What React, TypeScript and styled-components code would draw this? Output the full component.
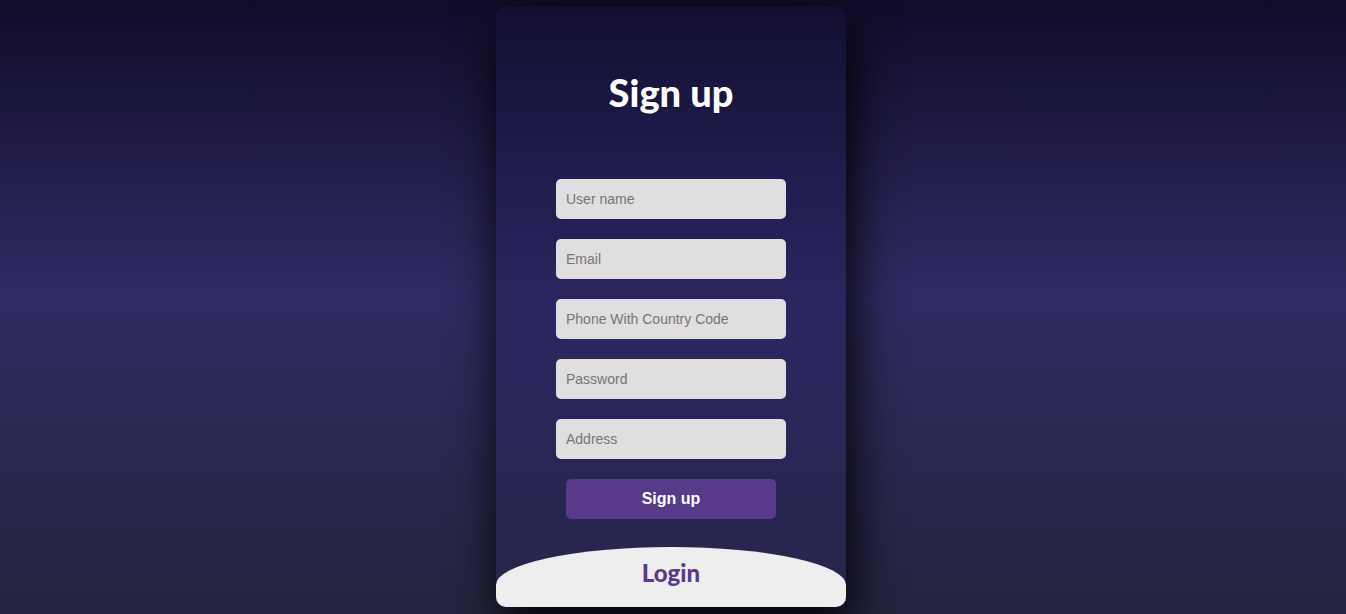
import React from 'react';
import styled, { createGlobalStyle } from 'styled-components';

const GlobalStyle = createGlobalStyle`
  html, body {
    margin: 0;
    padding: 0;
  }
  body {
    min-height: 100vh;
    font-family: "Lato", "Liberation Sans", sans-serif;
    background: linear-gradient(to bottom, #0f0c29 0%, #302b63 48%, #24243e 100%);
    background-attachment: fixed;
  }
`;

// 페이지 전체
const Page = styled.div`
  height: 100vh;
  display: flex;
  justify-content: center;
  align-items: center;
  padding-right: 4px; /* 카드가 살짝 왼쪽 */
`;

// 카드
const Card = styled.div`
  width: 350px;
  height: 600px;
  display: flex;
  flex-direction: column;
  overflow: hidden;
  border-radius: 10px;
  background: linear-gradient(to bottom, #120f31 0%, #1f1b4b 25%, #2b2660 50%, #28254a 100%);
  box-shadow: 5px 20px 50px #000;
`;

const Title = styled.h1`
  margin: 66px 0 0;
  text-align: center;
  font-family: "Lato", sans-serif;
  font-size: 38px;
  line-height: 1;
  font-weight: 900;
  color: #fff;
`;

const Form = styled.form`
  margin-top: 68px;
  display: flex;
  flex-direction: column;
  align-items: center;
  gap: 20px;
`;

const Input = styled.input`
  width: 230px;
  height: 40px;
  box-sizing: border-box;
  padding: 10px;
  border: none;
  outline: none;
  border-radius: 5px;
  background: #e0dede;
  font-family: "Liberation Sans", Arial, sans-serif;
  font-size: 14px;
  color: #333;

  &::placeholder {
    color: #757575;
  }
`;

const Button = styled.button`
  width: 210px;
  height: 40px;
  border: none;
  border-radius: 5px;
  background: #573b8a;
  color: #fff;
  font-family: "Liberation Sans", Arial, sans-serif;
  font-size: 16px;
  font-weight: bold;
  cursor: pointer;
`;

// 아래 로그인 영역
const LoginPanel = styled.div`
  margin-top: auto;
  height: 60px;
  background: #eee;
  border-radius: 175px 175px 0 0 / 38px 38px 0 0;
  display: flex;
  justify-content: center;
  padding-top: 12px;
  box-sizing: border-box;
`;

const LoginLabel = styled.span`
  font-family: "Lato", sans-serif;
  font-size: 24px;
  line-height: 28px;
  font-weight: 900;
  color: #573b8a;
`;

const fields = ['User name', 'Email', 'Phone With Country Code', 'Password', 'Address'];

const App: React.FC = () => {
  return (
    <>
      <GlobalStyle />
      <Page>
        <Card>
          <Title>Sign up</Title>
          <Form onSubmit={(e) => e.preventDefault()}>
            {fields.map((f) => (
              <Input key={f} placeholder={f} type={f === 'Password' ? 'password' : 'text'} />
            ))}
            <Button type="submit">Sign up</Button>
          </Form>
          <LoginPanel>
            <LoginLabel>Login</LoginLabel>
          </LoginPanel>
        </Card>
      </Page>
    </>
  );
};

export default App;
